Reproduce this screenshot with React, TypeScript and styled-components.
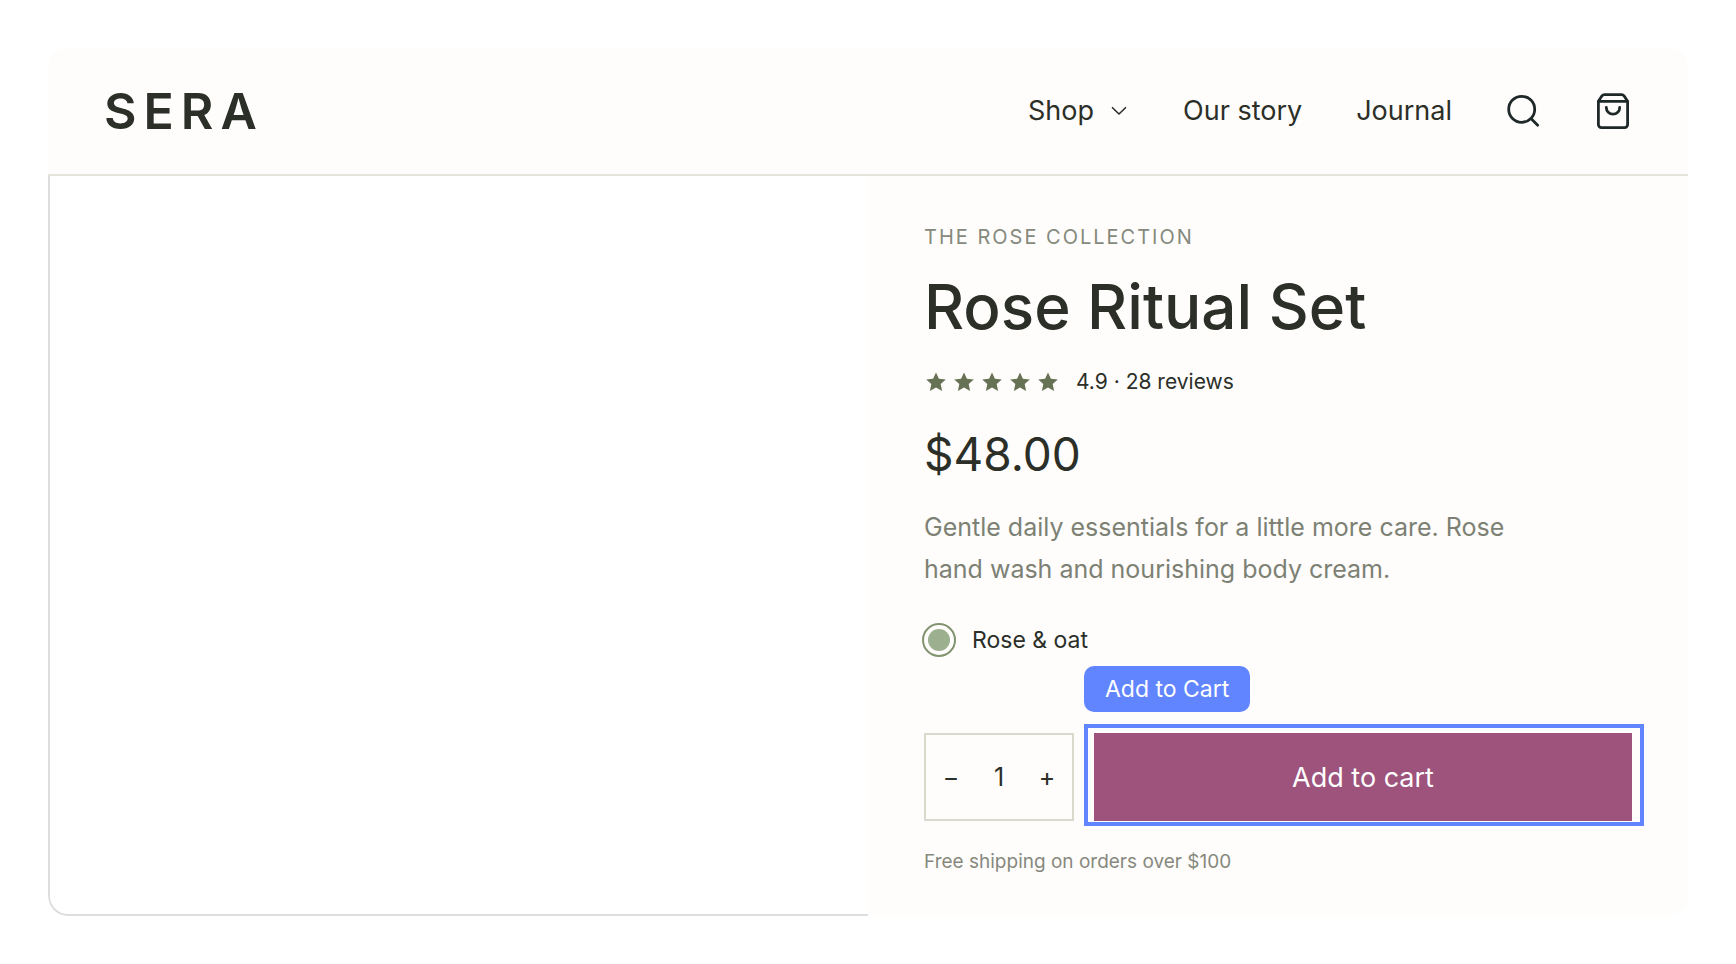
import React, { useState } from "react";
import styled, { createGlobalStyle } from "styled-components";

const ink = "#2b2f28";
const surface = "#fefdfc";
const accent = "#6085ff";

const GlobalStyle = createGlobalStyle`
  *, *::before, *::after { box-sizing: border-box; }
  body {
    margin: 0;
    background: #ffffff;
    color: ${ink};
    font-family: Inter, "Liberation Sans", sans-serif;
    -webkit-font-smoothing: antialiased;
  }
  button, input { font: inherit; color: inherit; }
`;

const Page = styled.div`
  padding: 48px;
`;

const Card = styled.div`
  border-radius: 20px;
  overflow: hidden;
`;

const Header = styled.header`
  display: flex;
  align-items: center;
  justify-content: space-between;
  height: 128px;
  padding: 0 56px;
  background: ${surface};
  border-bottom: 2px solid #e4e4dc;
`;

const Logo = styled.a`
  font-size: 50px;
  font-weight: 600;
  line-height: 56px;
  letter-spacing: 7px;
  color: ${ink};
  text-decoration: none;
`;

const Nav = styled.nav`
  display: flex;
  align-items: center;
  gap: 54px;
`;

const NavLink = styled.a`
  display: inline-flex;
  align-items: center;
  gap: 15px;
  font-size: 27px;
  line-height: 36px;
  color: ${ink};
  text-decoration: none;
`;

const IconButton = styled.button`
  display: flex;
  padding: 0;
  border: 0;
  background: none;
  color: #1f2829;
  cursor: pointer;
`;

const Product = styled.main`
  display: grid;
  grid-template-columns: 1fr 1fr;
`;

const Media = styled.div`
  border-left: 2px solid #dddddd;
  border-bottom: 2px solid #dddddd;
  border-bottom-left-radius: 20px;
`;

const Details = styled.section`
  display: flex;
  flex-direction: column;
  padding: 48px 56px 37px;
  background: ${surface};
`;

const Eyebrow = styled.p`
  margin: 0;
  font-size: 20px;
  line-height: 26px;
  letter-spacing: 2px;
  text-transform: uppercase;
  color: #858a7c;
`;

const Title = styled.h1`
  margin: 22px 0 0;
  font-size: 62px;
  font-weight: 500;
  line-height: 70px;
`;

const Rating = styled.div`
  display: flex;
  align-items: center;
  gap: 16px;
  margin-top: 24px;
  font-size: 21px;
  line-height: 32px;
`;

const Stars = styled.div`
  display: flex;
  gap: 4px;
  color: #667253;
`;

const Price = styled.p`
  margin: 28px 0 0;
  font-size: 46px;
  line-height: 56px;
`;

const Description = styled.p`
  max-width: 620px;
  margin: 24px 0 0;
  font-size: 25px;
  line-height: 42px;
  color: #7d8174;
`;

const Option = styled.label`
  display: flex;
  align-items: center;
  gap: 16px;
  margin: 32px 0 0 -2px;
  font-size: 23px;
  line-height: 36px;
  cursor: pointer;
`;

const Swatch = styled.input`
  appearance: none;
  width: 34px;
  height: 34px;
  margin: 0;
  padding: 4px;
  border: 2px solid #82946f;
  border-radius: 50%;
  background: #9caf8f content-box;
`;

const BuyRow = styled.div`
  display: flex;
  gap: 20px;
  height: 88px;
  margin-top: 75px;
`;

const Stepper = styled.div`
  display: flex;
  flex: none;
  width: 150px;
  border: 2px solid #d9dace;
  font-size: 25px;
`;

const StepButton = styled.button`
  width: 50px;
  padding: 0;
  border: 0;
  background: none;
  cursor: pointer;
`;

const Quantity = styled.input`
  flex: 1;
  min-width: 0;
  padding: 0;
  border: 0;
  background: none;
  text-align: center;
`;

const CartSlot = styled.div`
  position: relative;
  flex: 1;
  display: flex;
`;

const CartButton = styled.button`
  flex: 1;
  border: 0;
  background: #9d537c;
  color: #ffffff;
  font-size: 27px;
  cursor: pointer;
`;

const Highlight = styled.div`
  position: absolute;
  inset: -9px -12px -5px -10px;
  border: 4px solid ${accent};
  pointer-events: none;
`;

const HighlightTag = styled.span`
  position: absolute;
  left: -10px;
  bottom: 109px;
  padding: 0 21px;
  border-radius: 10px;
  background: ${accent};
  color: #ffffff;
  font-size: 23px;
  line-height: 46px;
  white-space: nowrap;
`;

const Note = styled.p`
  margin: 24px 0 0;
  font-size: 19px;
  line-height: 34px;
  color: #87897e;
`;

const ChevronIcon = () => (
  <svg width="20" height="20" viewBox="1 1 20 20" fill="none" stroke="currentColor" strokeWidth="1.6" aria-hidden="true">
    <path d="M4.500 7.700 11 14l6.500-6.300" strokeLinecap="round" strokeLinejoin="round" />
  </svg>
);

const SearchIcon = () => (
  <svg width="36" height="36" viewBox="0 0 36 36" fill="none" stroke="currentColor" strokeWidth="2.8" strokeLinecap="round" aria-hidden="true">
    <circle cx="15.700" cy="16.300" r="13" />
    <path d="m25.200 25.800 6.500 6.500" />
  </svg>
);

const BagIcon = () => (
  <svg width="36" height="36" viewBox="0 0 36 36" fill="none" stroke="currentColor" strokeWidth="2.8" strokeLinecap="round" strokeLinejoin="round" aria-hidden="true">
    <path d="M2.400 8.200v23.400a3 3 0 0 0 3 3h23.200a3 3 0 0 0 3-3V8.200L28 2.800a3 3 0 0 0-2.400-1.200H8.400A3 3 0 0 0 6 2.800Z" />
    <path d="M2.800 8.300h28.400" />
    <path d="M10.300 14.500a6.700 6.700 0 0 0 13.400 0" />
  </svg>
);

const StarIcon = () => (
  <svg width="24" height="24" viewBox="0 0 24 24" fill="currentColor" aria-hidden="true">
    <path d="m12 2.500 2.900 6.200 6.900.8-5.100 4.600 1.400 6.900-6.100-3.400L5.900 21l1.400-6.900-5.100-4.600 6.900-.8Z" />
  </svg>
);

export default function App() {
  const [quantity, setQuantity] = useState(1);

  return (
    <>
      <GlobalStyle />
      <Page>
        <Card>
          <Header>
            <Logo href="#">SERA</Logo>
            <Nav>
              <NavLink href="#shop">
                Shop
                <ChevronIcon />
              </NavLink>
              <NavLink href="#story">Our story</NavLink>
              <NavLink href="#journal">Journal</NavLink>
              <IconButton type="button" aria-label="Search">
                <SearchIcon />
              </IconButton>
              <IconButton type="button" aria-label="Bag">
                <BagIcon />
              </IconButton>
            </Nav>
          </Header>
          <Product>
            <Media />
            <Details>
              <Eyebrow>The Rose Collection</Eyebrow>
              <Title>Rose Ritual Set</Title>
              <Rating>
                <Stars>
                  {[1, 2, 3, 4, 5].map((star) => (
                    <StarIcon key={star} />
                  ))}
                </Stars>
                <span>4.9 · 28 reviews</span>
              </Rating>
              <Price>$48.00</Price>
              <Description>
                Gentle daily essentials for a little more care. Rose hand wash and nourishing body cream.
              </Description>
              <Option>
                <Swatch type="radio" name="scent" defaultChecked />
                Rose &amp; oat
              </Option>
              <BuyRow>
                <Stepper>
                  <StepButton type="button" aria-label="Decrease quantity" onClick={() => setQuantity(Math.max(1, quantity - 1))}>
                    −
                  </StepButton>
                  <Quantity
                    aria-label="Quantity"
                    inputMode="numeric"
                    value={quantity}
                    onChange={(event) => setQuantity(Number(event.target.value) || 1)}
                  />
                  <StepButton type="button" aria-label="Increase quantity" onClick={() => setQuantity(quantity + 1)}>
                    +
                  </StepButton>
                </Stepper>
                <CartSlot>
                  <CartButton type="button">Add to cart</CartButton>
                  <Highlight />
                  <HighlightTag>Add to Cart</HighlightTag>
                </CartSlot>
              </BuyRow>
              <Note>Free shipping on orders over $100</Note>
            </Details>
          </Product>
        </Card>
      </Page>
    </>
  );
}
